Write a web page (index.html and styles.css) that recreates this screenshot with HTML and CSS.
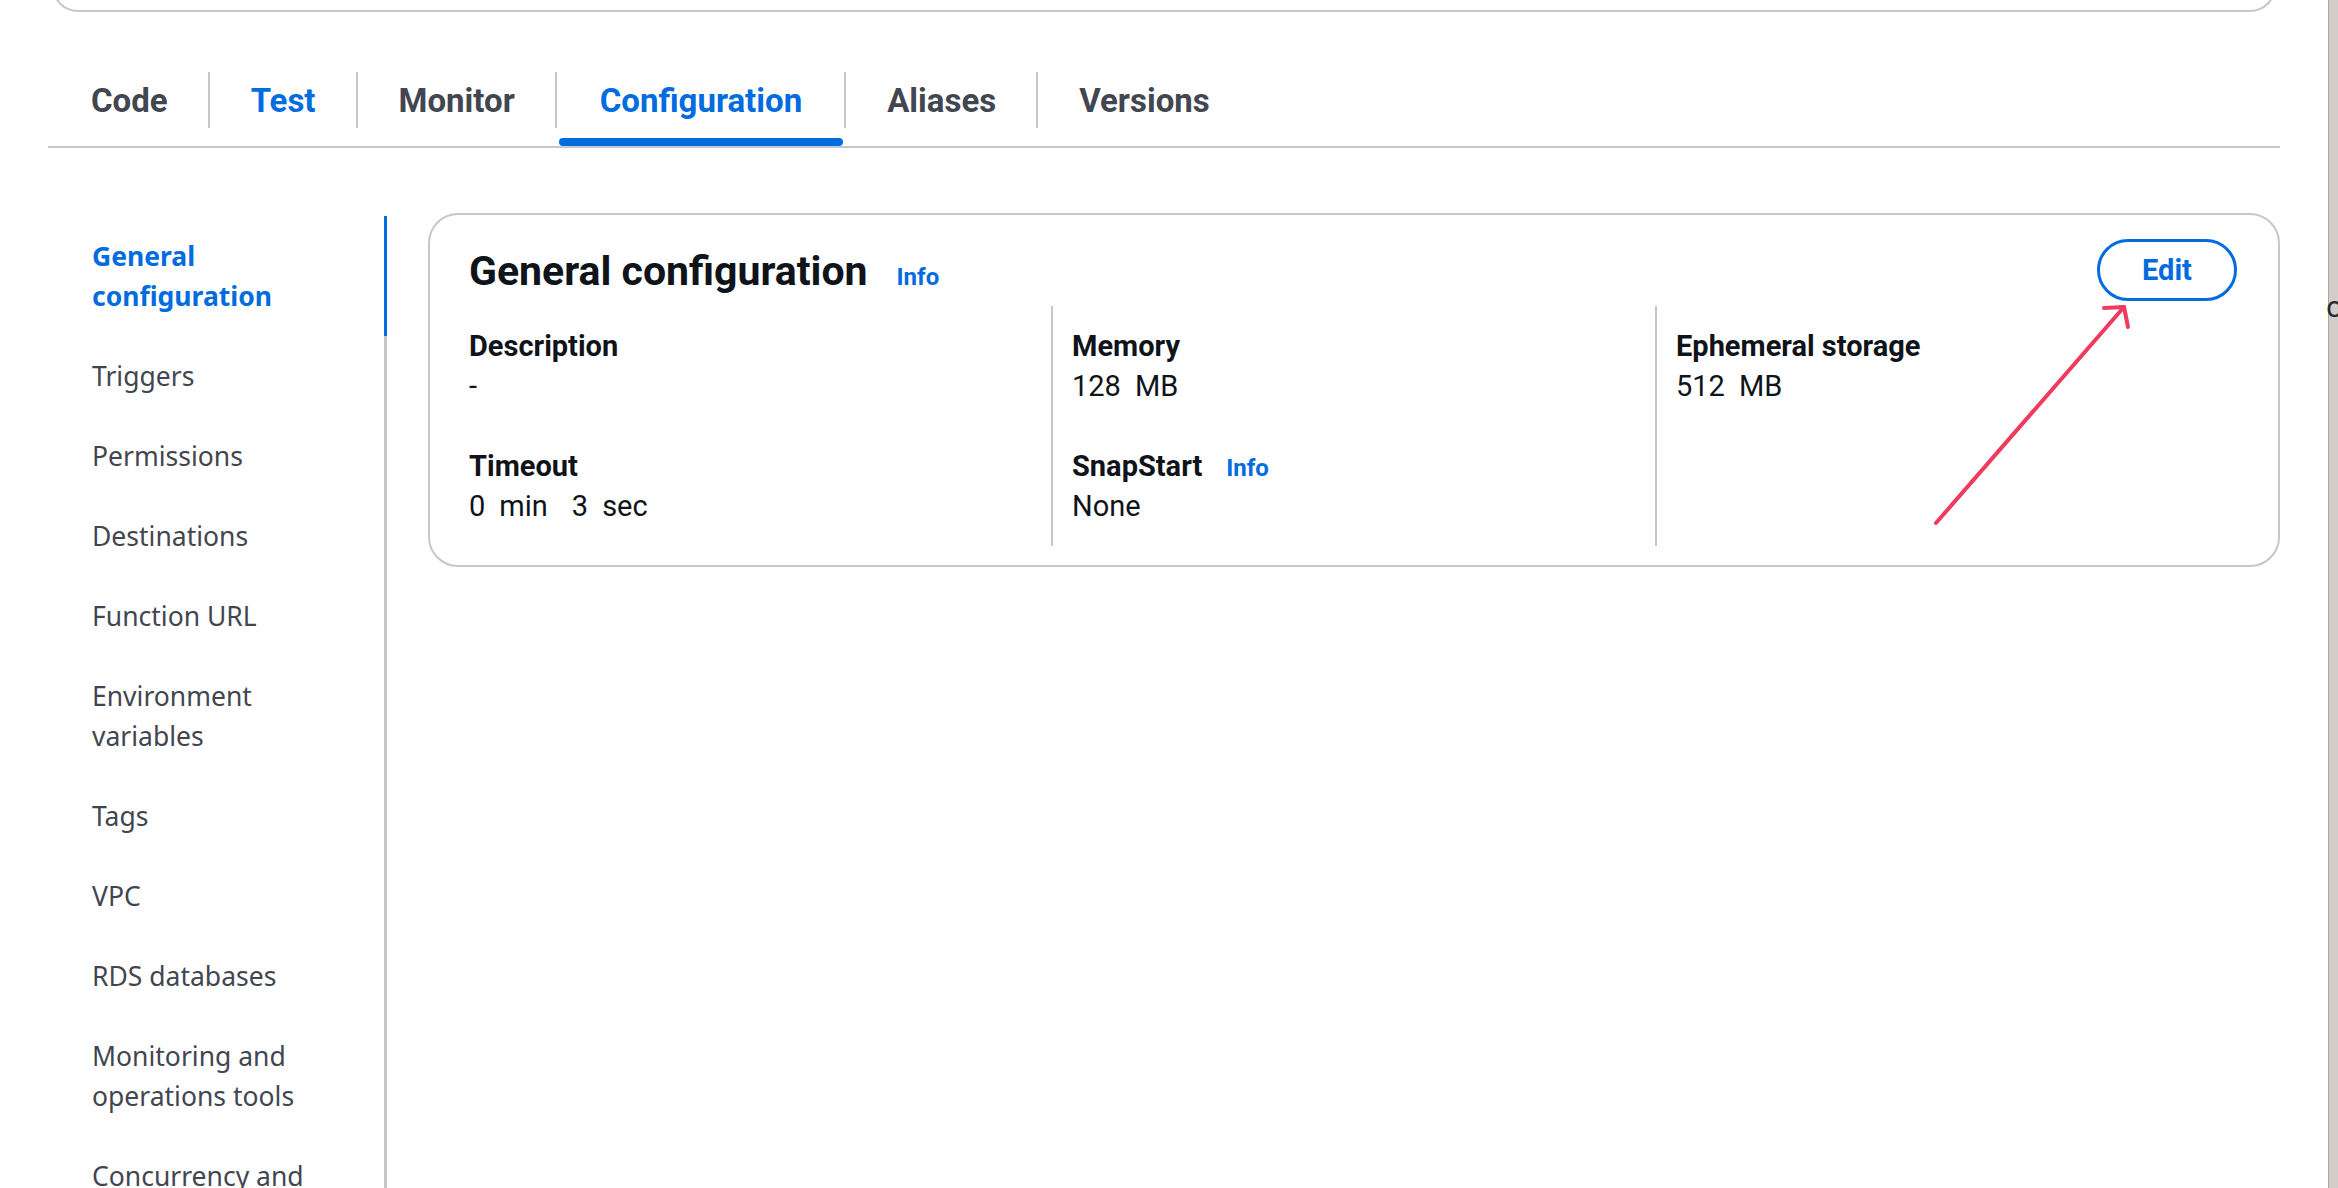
FILE: index.html
```html
<!DOCTYPE html>
<html lang="en">
<head>
<meta charset="utf-8">
<title>General configuration</title>
<link rel="stylesheet" href="styles.css">
</head>
<body>
<div class="screen">
  <div class="main">
    <div class="prev-card"></div>

    <nav class="tabs">
      <div class="tab tab-first"><span class="tab-label">Code</span><span class="tab-ind"></span></div>
      <div class="tab tab-blue"><span class="tab-label">Test</span><span class="tab-ind"></span></div>
      <div class="tab"><span class="tab-label">Monitor</span><span class="tab-ind"></span></div>
      <div class="tab tab-active"><span class="tab-label">Configuration</span><span class="tab-ind"></span></div>
      <div class="tab"><span class="tab-label">Aliases</span><span class="tab-ind"></span></div>
      <div class="tab"><span class="tab-label">Versions</span><span class="tab-ind"></span></div>
    </nav>

    <div class="content">
      <aside class="sidenav">
        <a class="nav-item nav-active">General configuration</a>
        <a class="nav-item">Triggers</a>
        <a class="nav-item">Permissions</a>
        <a class="nav-item">Destinations</a>
        <a class="nav-item">Function URL</a>
        <a class="nav-item">Environment variables</a>
        <a class="nav-item">Tags</a>
        <a class="nav-item">VPC</a>
        <a class="nav-item">RDS databases</a>
        <a class="nav-item">Monitoring and operations tools</a>
        <a class="nav-item">Concurrency and recursion detection</a>
        <a class="nav-item">Asynchronous invocation</a>
      </aside>

      <section class="card">
        <header class="card-head">
          <h2 class="card-title">General configuration<a class="info info-head">Info</a></h2>
          <button class="btn">Edit</button>
        </header>
        <div class="cols">
          <div class="col col-first">
            <div class="kv">
              <div class="k">Description</div>
              <div class="v">-</div>
            </div>
            <div class="kv">
              <div class="k">Timeout</div>
              <div class="v"><span>0</span><span class="unit">min</span><span class="num-gap">3</span><span class="unit">sec</span></div>
            </div>
          </div>
          <div class="col">
            <div class="kv">
              <div class="k">Memory</div>
              <div class="v"><span>128</span><span class="unit">MB</span></div>
            </div>
            <div class="kv">
              <div class="k">SnapStart<a class="info info-label">Info</a></div>
              <div class="v">None</div>
            </div>
          </div>
          <div class="col">
            <div class="kv">
              <div class="k">Ephemeral storage</div>
              <div class="v"><span>512</span><span class="unit">MB</span></div>
            </div>
          </div>
        </div>
      </section>
    </div>

    <svg class="arrow" width="2328" height="1188" viewBox="0 0 2328 1188">
      <g stroke="#ef3b5e" stroke-width="4" stroke-linecap="round" fill="none">
        <line x1="1936" y1="523" x2="2124" y2="307"/>
        <line x1="2124" y1="307" x2="2104" y2="308"/>
        <line x1="2124" y1="307" x2="2128" y2="327"/>
      </g>
    </svg>
  </div>
  <div class="scrollbar"><span class="edge-glyph">o</span></div>
</div>
</body>
</html>
```

FILE: styles.css
```css
html, body {
  margin: 0;
  padding: 0;
  background: #ffffff;
  overflow: hidden;
}

.screen {
  display: flex;
  width: 2338px;
  height: 1188px;
  overflow: hidden;
}

.main {
  position: relative;
  flex: 1;
  padding: 0 48px;
  font-family: Roboto, "Liberation Sans", sans-serif;
  color: #0f141a;
}

.prev-card {
  height: 60px;
  margin: -48px 4px 0;
  box-sizing: border-box;
  border: 2px solid #c6c6cd;
  border-top: none;
  border-radius: 0 0 26px 26px;
}

/* Tabs */
.tabs {
  display: flex;
  margin-top: 60px;
  border-bottom: 2px solid #c6c6cd;
}

.tab {
  display: flex;
  flex-direction: column;
}

.tab-label {
  height: 54px;
  padding: 2px 40px 0 41px;
  line-height: 54px;
  font-size: 33px;
  font-weight: 700;
  color: #424650;
  border-left: 2px solid #c6c6cd;
  white-space: nowrap;
}

.tab-first .tab-label {
  border-left: none;
  padding-left: 43px;
}

.tab-blue .tab-label,
.tab-active .tab-label {
  color: #006ce0;
}

.tab-active .tab-label {
  padding-left: 43px;
  padding-right: 42px;
}

.tab-ind {
  height: 8px;
  margin: 10px 1px 0 4px;
  border-radius: 4px;
}

.tab-active .tab-ind {
  background: #006ce0;
}

/* Content */
.content {
  display: flex;
  align-items: flex-start;
  margin-top: 65px;
}

.sidenav {
  display: flex;
  flex-direction: column;
  flex-shrink: 0;
  width: 339px;
  margin-top: 3px;
  font-family: "Noto Sans", "Open Sans", sans-serif;
}

.nav-item {
  display: block;
  padding: 20px 40px 20px 44px;
  border-right: 3px solid #c6c6cd;
  font-size: 26.5px;
  line-height: 40px;
  color: #424650;
}

.nav-active {
  color: #006ce0;
  font-weight: 700;
  border-right-color: #006ce0;
}

/* Card */
.card {
  flex: 1;
  margin-left: 41px;
  padding: 24px 19px 19px 17px;
  border: 2px solid #c6c6cd;
  border-radius: 30px;
}

.card-head {
  display: flex;
  align-items: flex-start;
  justify-content: space-between;
  height: 62px;
  margin: 0 22px;
}

.card-title {
  margin: 5px 0 0;
  font-size: 41px;
  line-height: 54px;
  font-weight: 700;
  color: #0f141a;
}

.info {
  font-weight: 700;
  line-height: 1;
  color: #006ce0;
}

.info-head {
  margin-left: 29px;
  font-size: 24px;
}

.info-label {
  margin-left: 24px;
  font-size: 24px;
}

.btn {
  width: 140px;
  height: 62px;
  padding: 0;
  background: #ffffff;
  border: 3px solid #006ce0;
  border-radius: 31px;
  font-family: Roboto, "Liberation Sans", sans-serif;
  font-size: 29px;
  font-weight: 700;
  color: #006ce0;
}

.cols {
  display: grid;
  grid-template-columns: repeat(3, 1fr);
  margin-top: 5px;
}

.col {
  display: flex;
  flex-direction: column;
  gap: 40px;
  padding: 20px 0 20px 19px;
  border-left: 2px solid #c6c6cd;
}

.col-first {
  border-left-color: transparent;
  padding-left: 20px;
}

.k {
  font-size: 29px;
  line-height: 40px;
  font-weight: 700;
}

.v {
  font-size: 29px;
  line-height: 40px;
  font-weight: 400;
}

.unit {
  margin-left: 14px;
}

.num-gap {
  margin-left: 24px;
}

/* Annotation arrow over the page */
.arrow {
  position: absolute;
  left: 0;
  top: 0;
  pointer-events: none;
}

/* Window scrollbar strip */
.scrollbar {
  position: relative;
  width: 9px;
  flex-shrink: 0;
  background: #d1cdca;
  border-left: 1px solid #a9a6a3;
}

.edge-glyph {
  position: absolute;
  top: 291px;
  left: -3px;
  font-family: "DejaVu Sans", sans-serif;
  font-size: 28px;
  line-height: 34px;
  color: #2a2a2a;
}
```
